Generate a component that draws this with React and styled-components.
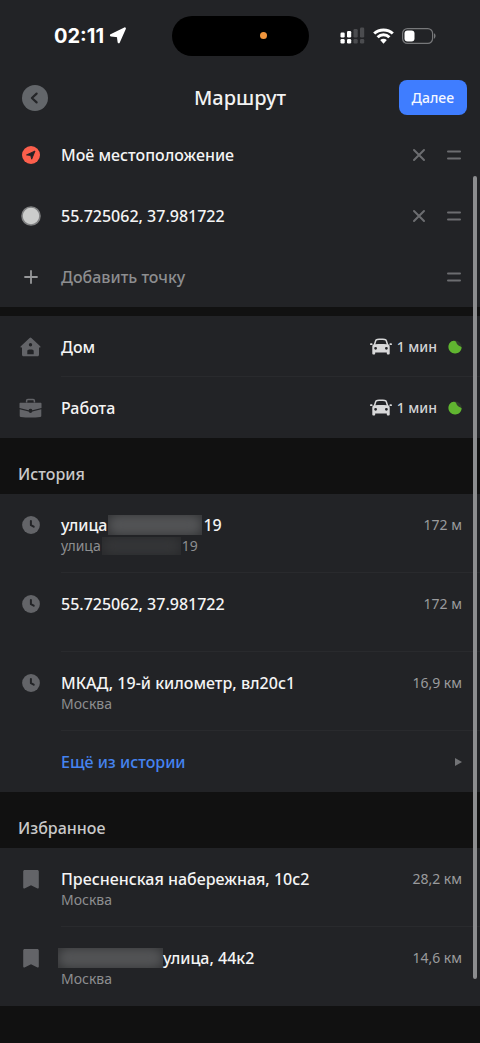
import { useState } from "react";
import styled, { createGlobalStyle } from "styled-components";

const GlobalStyle = createGlobalStyle`
  * {
    box-sizing: border-box;
  }
  body {
    margin: 0;
    background-color: #111111;
    font-family: "Noto Sans", "Open Sans", sans-serif;
    color: #f2f2f2;
  }
  button {
    font-family: inherit;
    border: none;
    background: none;
    padding: 0;
    color: inherit;
    cursor: pointer;
  }
  svg {
    display: block;
  }
`;

const Page = styled.div`
  position: relative;
  width: 100%;
  min-height: 100vh;
  overflow: hidden;
`;

const Top = styled.header`
  background-color: #222326;
`;

const StatusBar = styled.div`
  display: grid;
  grid-template-columns: 1fr 137px 1fr;
  align-items: center;
  height: 71px;
`;

const Clock = styled.div`
  display: flex;
  align-items: center;
  gap: 5px;
  padding-left: 54px;
  font-family: Inter, sans-serif;
  font-size: 20px;
  line-height: 24px;
  font-weight: 700;
  color: #ffffff;
`;

const Island = styled.div`
  display: flex;
  align-items: center;
  justify-content: flex-end;
  height: 40px;
  padding-right: 42px;
  border-radius: 20px;
  background-color: #000000;
`;

const MicDot = styled.span`
  width: 7px;
  height: 7px;
  border-radius: 50%;
  background-color: #f0953c;
`;

const Indicators = styled.div`
  display: flex;
  align-items: center;
  justify-content: flex-end;
  gap: 8px;
  padding-right: 44px;
`;

const NavBar = styled.div`
  display: grid;
  grid-template-columns: 1fr auto 1fr;
  align-items: center;
  height: 53px;
  padding: 0 13px;
`;

const BackButton = styled.button`
  && {
    display: flex;
    align-items: center;
    justify-content: center;
    width: 26px;
    height: 26px;
    margin-left: 9px;
    border-radius: 50%;
    background-color: #63666a;
  }
`;

const Title = styled.h1`
  margin: 0;
  font-size: 20px;
  line-height: 28px;
  font-weight: 500;
`;

const NextButton = styled.button`
  && {
    justify-self: end;
    height: 35px;
    padding: 0 13px;
    border-radius: 8px;
    background-color: #3f7dff;
    font-size: 14px;
    font-weight: 500;
    color: #f4f7ff;
  }
`;

const Group = styled.ul`
  list-style: none;
  margin: 0;
  padding: 0;
  background-color: #222326;
`;

const Divider = styled.div`
  height: 9px;
  background-color: #111111;
`;

const Row = styled.li`
  position: relative;
  display: flex;
  align-items: ${(props) => (props.$tall ? "flex-start" : "center")};
  height: ${(props) => (props.$tall ? "79px" : "61px")};
  padding: ${(props) => (props.$tall ? "20px 18px 0 0" : "0 18px 0 0")};
  &:not(:last-child)::after {
    content: "";
    position: absolute;
    left: 61px;
    right: 0;
    bottom: 0;
    height: 1px;
    background-color: ${(props) => (props.$plain ? "transparent" : "#292a2d")};
  }
`;

const IconCell = styled.span`
  display: flex;
  align-items: center;
  justify-content: center;
  flex: 0 0 61px;
  height: 22px;
`;

const Texts = styled.button`
  display: flex;
  flex: 1;
  flex-direction: column;
  align-items: flex-start;
  text-align: left;
`;

const Name = styled.span`
  display: flex;
  align-items: center;
  font-size: 16px;
  line-height: 22px;
  font-weight: 500;
  color: ${(props) => props.$color || "#f4f4f4"};
`;

const Sub = styled.span`
  display: flex;
  align-items: center;
  font-size: 14px;
  line-height: 20px;
  color: #8d8e90;
`;

const Distance = styled.span`
  font-size: 14px;
  line-height: 22px;
  color: #9a9b9d;
`;

const Actions = styled.div`
  display: flex;
  align-items: center;
  gap: 20px;
`;

const Travel = styled.div`
  display: flex;
  align-items: center;
  gap: 5px;
  font-size: 14px;
  line-height: 22px;
  font-weight: 500;
  color: #d4d4d5;
`;

const Traffic = styled.span`
  margin-left: 6px;
`;

const Hidden = styled.span`
  width: ${(props) => props.$width};
  height: ${(props) => (props.$small ? "18px" : "20px")};
  margin: ${(props) => (props.$lead ? "0 0 0 -3px" : "0 1px")};
  background-color: ${(props) => (props.$small ? "#292a2c" : "#353638")};
  overflow: hidden;
  &::before {
    content: "";
    display: block;
    height: 100%;
    background-color: ${(props) => (props.$small ? "#343537" : "#525355")};
    border-radius: 10px;
    filter: blur(5px);
  }
`;

const SectionTitle = styled.h2`
  margin: 0;
  padding: 25px 18px 9px;
  font-size: 16px;
  line-height: 22px;
  font-weight: 500;
  color: #c9c9c9;
`;

const ScrollBar = styled.div`
  position: absolute;
  top: 176px;
  bottom: 64px;
  right: 3px;
  width: 4px;
  border-radius: 2px;
  background-color: #8c8d8f;
`;

const ArrowIcon = () => (
  <svg width="18" height="17" viewBox="0 0 18 17">
    <path
      d="M2 8.300 15.800 1.500 9.700 15.200 8.900 9.100Z"
      fill="#fff"
      stroke="#fff"
      strokeWidth="2.200"
      strokeLinejoin="round"
    />
  </svg>
);

const SignalIcon = () => (
  <svg width="25" height="17" viewBox="0 0 25 17">
    <g fill="#fff">
      <rect x="0.500" y="5.500" width="4.200" height="5" rx="1.200" />
      <rect x="0.500" y="12" width="4.200" height="4.500" rx="1.200" />
      <rect x="7" y="4" width="4.200" height="6.500" rx="1.200" />
      <rect x="7" y="12" width="4.200" height="4.500" rx="1.200" />
    </g>
    <g fill="#4b4c4f">
      <rect x="13.500" y="2" width="4.200" height="8.500" rx="1.200" />
      <rect x="13.500" y="12" width="4.200" height="4.500" rx="1.200" />
      <rect x="20" y="0.500" width="4.200" height="10" rx="1.200" />
      <rect x="20" y="12" width="4.200" height="4.500" rx="1.200" />
    </g>
  </svg>
);

const WifiIcon = () => (
  <svg width="21" height="16" viewBox="0 0 21 16">
    <g fill="none" stroke="#fff" strokeWidth="3">
      <path d="M1.200 5.500C6.200.8 14.800.8 19.800 5.500" />
      <path d="M4.600 9.300C7.900 6 13.100 6 16.400 9.300" />
    </g>
    <path d="M7.200 12.100c1.900-1.700 4.700-1.700 6.600 0L10.500 15.700Z" fill="#fff" />
  </svg>
);

const BatteryIcon = () => (
  <svg width="34" height="16" viewBox="0 0 34 16">
    <rect x="0.600" y="0.600" width="30" height="14.800" rx="4.800" fill="none" stroke="#77787a" strokeWidth="1.200" />
    <rect x="2.500" y="2.500" width="10" height="11" rx="3" fill="#fff" />
    <path d="M32 5.300c2 .8 2 4.600 0 5.400Z" fill="#77787a" />
  </svg>
);

const ChevronIcon = () => (
  <svg width="26" height="26" viewBox="0 0 26 26">
    <path d="M14.600 8.600 9.900 13l4.700 4.400" fill="none" stroke="#242528" strokeWidth="2.200" strokeLinecap="round" strokeLinejoin="round" />
  </svg>
);

const MeIcon = () => (
  <svg width="18" height="18" viewBox="0 0 18 18">
    <circle cx="9" cy="9" r="9" fill="#fc5f4c" />
    <path d="M4.500 8.900 13 5 9.700 13.200 8.700 9.500Z" fill="#222326" stroke="#222326" strokeWidth=".9" strokeLinejoin="round" />
  </svg>
);

const PointIcon = () => (
  <svg width="20" height="20" viewBox="0 0 20 20">
    <circle cx="10" cy="10" r="9" fill="#cbcccb" stroke="#808182" strokeWidth="1.600" />
  </svg>
);

const PlusIcon = () => (
  <svg width="14" height="14" viewBox="0 0 14 14">
    <path d="M7 1v12M1 7h12" stroke="#97989a" strokeWidth="1.800" strokeLinecap="round" />
  </svg>
);

const CrossIcon = () => (
  <svg width="14" height="14" viewBox="0 0 14 14">
    <path d="M2 2l10 10M12 2 2 12" stroke="#6c6d70" strokeWidth="2" strokeLinecap="round" />
  </svg>
);

const DragIcon = () => (
  <svg width="16" height="12" viewBox="0 0 16 12">
    <path d="M2 2.600h12M2 9.400h12" stroke="#6c6d70" strokeWidth="2" strokeLinecap="round" />
  </svg>
);

const HomeIcon = () => (
  <svg width="21" height="20" viewBox="0 0 21 20">
    <path
      fillRule="evenodd"
      d="M9.600 1a1.300 1.300 0 0 1 1.800 0l8.800 8.200c.6.700.3 1.400-.5 1.400H19v7.200c0 .9-.6 1.500-1.500 1.500h-14c-.9 0-1.500-.6-1.500-1.500v-7.200h-.7c-.8 0-1.100-.7-.5-1.400ZM10.500 6a1.700 1.700 0 1 0 0 3.400 1.700 1.700 0 0 0 0-3.400ZM7.300 17.300h6.400v-3c0-1.200-.7-1.900-1.900-1.900H9.200c-1.200 0-1.900.7-1.900 1.900Z"
      fill="#636468"
    />
  </svg>
);

const WorkIcon = () => (
  <svg width="23" height="20" viewBox="0 0 23 20">
    <path d="M7.600 4.500V2.700c0-.8.500-1.300 1.300-1.300h5.200c.8 0 1.300.5 1.300 1.300v1.800" fill="none" stroke="#636468" strokeWidth="1.500" />
    <path d="M1.500 4.700h20c.7 0 1 .4 1 1v4.200l-9.100 2.300a2 2 0 0 0-3.800 0L.5 9.900V5.700c0-.6.3-1 1-1Z" fill="#636468" />
    <path d="M.7 11.200l8.900 2.300a2 2 0 0 0 3.800 0l8.900-2.300v6.600c0 .7-.3 1-1 1.100-6.500.7-13 .700-19.600 0-.7-.1-1-.4-1-1.100Z" fill="#636468" />
  </svg>
);

const ClockIcon = () => (
  <svg width="18" height="18" viewBox="0 0 18 18">
    <circle cx="9" cy="9" r="8.900" fill="#636468" />
    <path d="M8.900 4.900v4.300l2.800 1.500" fill="none" stroke="#222326" strokeWidth="2" strokeLinecap="round" strokeLinejoin="round" />
  </svg>
);

const BookmarkIcon = () => (
  <svg width="16" height="19" viewBox="0 0 16 19">
    <path d="M1.800 0h12.400c1 0 1.600.6 1.600 1.600v16c0 .9-.6 1.200-1.300.8L8 15.200 1.500 18.400c-.7.4-1.300.1-1.300-.8v-16C.2.600.800 0 1.800 0Z" fill="#636468" />
  </svg>
);

const CarIcon = () => (
  <svg width="22" height="17" viewBox="0 0 22 17">
    <path
      fillRule="evenodd"
      d="M7.200.8C9.700.4 12.300.4 14.800.8c1.200.2 1.900.8 2.300 1.900l1.100 3.600c1.100.5 1.500 1.300 1.500 2.500v6.700c0 .6-.3.900-.9.900h-1.100c-.6 0-.9-.3-.9-.9v-1.100H5.200v1.100c0 .6-.3.900-.9.900H3.200c-.6 0-.9-.3-.9-.9V8.800c0-1.200.4-2 1.500-2.500l1.100-3.600C5.300 1.600 6 1 7.200.8ZM6.300 3.300l-.9 3c3.700-.5 7.500-.5 11.200 0l-.9-3c-.2-.6-.5-.9-1.200-1-2.300-.3-4.700-.3-7 0-.7.1-1 .4-1.200 1ZM5.600 8.900a1.400 1.400 0 1 0 0 2.800 1.400 1.400 0 0 0 0-2.800ZM16.400 8.900a1.400 1.400 0 1 0 0 2.800 1.400 1.400 0 0 0 0-2.800Z"
      fill="#d8d8d9"
    />
    <path d="M.9 6.200h.8M20.300 6.200h.8" stroke="#d8d8d9" strokeWidth="1.800" strokeLinecap="round" />
  </svg>
);

const TrafficIcon = () => (
  <svg width="14" height="14" viewBox="0 0 14 14">
    <circle cx="7.200" cy="7" r="6.400" fill="#303b2c" />
    <path d="M6 .7C8.400.9 8.200 2.800 9.200 4.300c1.100 1.600 3.200 1.800 4.400 3 0 3.600-2.900 6.200-6.500 6.200C3.300 13.500.4 10.500.4 7 .4 3.600 2.800.5 6 .7Z" fill="#60b530" />
  </svg>
);

const MoreIcon = () => (
  <svg width="8" height="8" viewBox="0 0 8 8">
    <path d="M1 0 8 4 1 8Z" fill="#727376" />
  </svg>
);

const startPoints = [
  { id: 1, name: "Моё местоположение", icon: <MeIcon /> },
  { id: 2, name: "55.725062, 37.981722", icon: <PointIcon /> },
];

const places = [
  { name: "Дом", icon: <HomeIcon />, time: "1 мин" },
  { name: "Работа", icon: <WorkIcon />, time: "1 мин" },
];

const history = [
  {
    name: <>улица<Hidden $width="94px" />19</>,
    sub: <>улица<Hidden $small $width="79px" />19</>,
    distance: "172 м",
  },
  { name: "55.725062, 37.981722", distance: "172 м" },
  { name: "МКАД, 19-й километр, вл20с1", sub: "Москва", distance: "16,9 км" },
];

const favorites = [
  { name: "Пресненская набережная, 10с2", sub: "Москва", distance: "28,2 км" },
  { name: <><Hidden $lead $width="105px" />улица, 44к2</>, sub: "Москва", distance: "14,6 км" },
];

const AddressRow = ({ item, icon }) => (
  <Row $tall>
    <IconCell>{icon}</IconCell>
    <Texts>
      <Name>{item.name}</Name>
      {item.sub && <Sub>{item.sub}</Sub>}
    </Texts>
    <Distance>{item.distance}</Distance>
  </Row>
);

const App = () => {
  const [points, setPoints] = useState(startPoints);

  const removePoint = (id) => {
    setPoints(points.filter((point) => point.id !== id));
  };

  return (
    <>
      <GlobalStyle />
      <Page>
        <Top>
          <StatusBar>
            <Clock>
              02:11
              <ArrowIcon />
            </Clock>
            <Island>
              <MicDot />
            </Island>
            <Indicators>
              <SignalIcon />
              <WifiIcon />
              <BatteryIcon />
            </Indicators>
          </StatusBar>
          <NavBar>
            <BackButton aria-label="Назад">
              <ChevronIcon />
            </BackButton>
            <Title>Маршрут</Title>
            <NextButton>Далее</NextButton>
          </NavBar>
        </Top>

        <main>
          <Group>
            {points.map((point) => (
              <Row key={point.id} $plain>
                <IconCell>{point.icon}</IconCell>
                <Texts>
                  <Name>{point.name}</Name>
                </Texts>
                <Actions>
                  <button aria-label="Удалить" onClick={() => removePoint(point.id)}>
                    <CrossIcon />
                  </button>
                  <button aria-label="Переместить">
                    <DragIcon />
                  </button>
                </Actions>
              </Row>
            ))}
            <Row $plain>
              <IconCell>
                <PlusIcon />
              </IconCell>
              <Texts>
                <Name $color="#8d8e90">Добавить точку</Name>
              </Texts>
              <Actions>
                <button aria-label="Переместить">
                  <DragIcon />
                </button>
              </Actions>
            </Row>
          </Group>
          <Divider />
          <Group>
            {places.map((place) => (
              <Row key={place.name}>
                <IconCell>{place.icon}</IconCell>
                <Texts>
                  <Name>{place.name}</Name>
                </Texts>
                <Travel>
                  <CarIcon />
                  {place.time}
                  <Traffic>
                    <TrafficIcon />
                  </Traffic>
                </Travel>
              </Row>
            ))}
          </Group>

          <SectionTitle>История</SectionTitle>
          <Group>
            {history.map((item, index) => (
              <AddressRow key={index} item={item} icon={<ClockIcon />} />
            ))}
            <Row>
              <IconCell />
              <Texts>
                <Name $color="#4583f0">Ещё из истории</Name>
              </Texts>
              <MoreIcon />
            </Row>
          </Group>

          <SectionTitle>Избранное</SectionTitle>
          <Group>
            {favorites.map((item, index) => (
              <AddressRow key={index} item={item} icon={<BookmarkIcon />} />
            ))}
          </Group>
        </main>
        <ScrollBar />
      </Page>
    </>
  );
};

export default App;
